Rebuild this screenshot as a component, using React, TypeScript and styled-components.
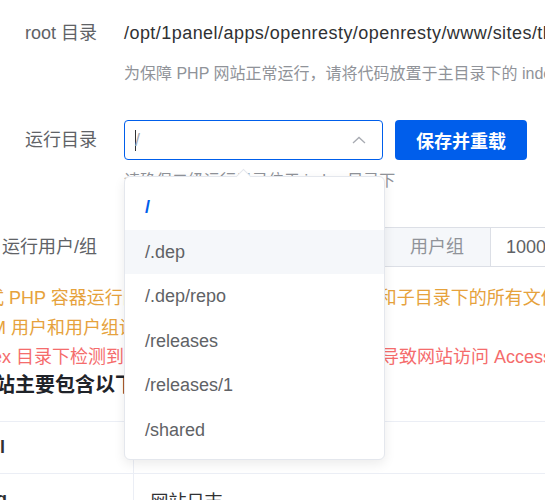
import styled, { createGlobalStyle } from "styled-components";

const GlobalStyle = createGlobalStyle`
  html, body {
    margin: 0;
    padding: 0;
    overflow: hidden;
    background: #ffffff;
  }
  body {
    font-family: "Liberation Sans", "Noto Sans CJK SC", sans-serif;
  }
`;

const COLORS = {
  primary: "#005eeb",
  label: "#606266",
  text: "#303133",
  help: "#909399",
  border: "#dcdfe6",
  light: "#ebeef5",
  fill: "#f5f7fa",
  warning: "#e6a23c",
  danger: "#f56c6c",
};

const options = ["/", "/.dep", "/.dep/repo", "/releases", "/releases/1", "/shared"];

const App = () => {
  return (
    <>
      <GlobalStyle />
      <Page>
        <FormItem>
          <Label>root 目录</Label>
          <Content>
            <Value>/opt/1panel/apps/openresty/openresty/www/sites/thinkphp/index</Value>
            <Help>为保障 PHP 网站正常运行，请将代码放置于主目录下的 index 目录中</Help>
          </Content>
        </FormItem>

        <FormItem>
          <Label>运行目录</Label>
          <Content>
            <SelectRow>
              <Select>
                <SelectText>
                  <Caret />/
                </SelectText>
                <svg width="14" height="8" viewBox="0 0 14 8">
                  <polyline
                    points="1,7 7,1.5 13,7"
                    fill="none"
                    stroke="#a8abb2"
                    strokeWidth="1.3"
                  />
                </svg>
              </Select>
              <PrimaryButton>保存并重载</PrimaryButton>
            </SelectRow>
            <Help>请确保二级运行目录位于 index 目录下</Help>
            <Dropdown>
              <Arrow />
              {options.map((o, i) => (
                <Option key={o} $selected={i === 0} $hover={i === 1}>
                  {o}
                </Option>
              ))}
            </Dropdown>
          </Content>
        </FormItem>

        <FormItem $gap={16}>
          <Label>运行用户/组</Label>
          <Content>
            <UserRow>
              <Group $width="259px">
                <Prepend>用户</Prepend>
                <GroupInput>1000</GroupInput>
              </Group>
              <Group>
                <Prepend>用户组</Prepend>
                <GroupInput>1000</GroupInput>
              </Group>
            </UserRow>
          </Content>
        </FormItem>

        <Notes>
          <Note $color={COLORS.warning} $lh={30}>
            方式 PHP 容器运行的网站，需要将网站目录 index{"\u00a0"} 和子目录下的所有文件、文件夹的所有者设置为 1000，本地 PHP 环境需要参考本地 PHP-
          </Note>
          <Note $color={COLORS.warning} $lh={30}>
            FPM 用户和用户组设置
          </Note>
          <Note $color={COLORS.danger} $lh={28}>
            index 目录下检测到 .user.ini 文件，其中配置可能会{"\u00a0"}导致网站访问 Access denied
          </Note>
          <Heading>网站主要包含以下目录：</Heading>
        </Notes>

        <DirTable>
          <tbody>
            <tr>
              <th>ssl</th>
              <td>证书文件夹</td>
            </tr>
            <tr>
              <th>log</th>
              <td>网站日志</td>
            </tr>
            <tr>
              <th>index</th>
              <td>网站默认目录</td>
            </tr>
          </tbody>
        </DirTable>
      </Page>
    </>
  );
};

export default App;

const Page = styled.div`
  margin-left: -32px;
  width: 900px;
  padding-top: 13px;
`;

const FormItem = styled.div<{ $gap?: number }>`
  display: grid;
  grid-template-columns: 156px 1fr;
  margin-bottom: ${(p) => (p.$gap ?? 35)}px;
`;

const Label = styled.label`
  padding-right: 27px;
  text-align: right;
  height: 40px;
  line-height: 40px;
  font-size: 18px;
  color: ${COLORS.label};
  white-space: nowrap;
`;

const Content = styled.div`
  position: relative;
  min-width: 0;
`;

const Value = styled.div`
  height: 40px;
  line-height: 40px;
  font-size: 18px;
  letter-spacing: 0.45px;
  color: ${COLORS.text};
  white-space: nowrap;
`;

const Help = styled.div`
  margin-top: 10px;
  font-size: 16px;
  line-height: 22px;
  color: ${COLORS.help};
  white-space: nowrap;
`;

const SelectRow = styled.div`
  display: flex;
  gap: 12px;
`;

const Select = styled.div`
  box-sizing: border-box;
  width: 259px;
  height: 40px;
  border: 1px solid ${COLORS.primary};
  border-radius: 4px;
  padding: 0 16px 0 10px;
  display: flex;
  align-items: center;
  justify-content: space-between;
`;

const SelectText = styled.span`
  display: flex;
  align-items: center;
  font-size: 18px;
  color: #a8abb2;
`;

const Caret = styled.span`
  display: inline-block;
  width: 1px;
  height: 21px;
  margin-right: -1px;
  background: #303133;
`;

const PrimaryButton = styled.button`
  height: 40px;
  padding: 0 21px;
  border: none;
  border-radius: 4px;
  background: ${COLORS.primary};
  color: #ffffff;
  font-family: inherit;
  font-size: 18px;
  font-weight: bold;
  cursor: pointer;
`;

const Dropdown = styled.div`
  position: absolute;
  top: 56px;
  left: 0;
  z-index: 10;
  box-sizing: border-box;
  width: 261px;
  padding: 8px 0 6px;
  background: #ffffff;
  border: 1px solid #e4e7ed;
  border-radius: 6px;
  box-shadow: 0 4px 12px rgba(0, 0, 0, 0.08);
`;

const Arrow = styled.span`
  position: absolute;
  top: -6px;
  left: 113px;
  width: 10px;
  height: 10px;
  background: #ffffff;
  border-top: 1px solid #e4e7ed;
  border-left: 1px solid #e4e7ed;
  transform: rotate(45deg);
`;

const Option = styled.div<{ $selected?: boolean; $hover?: boolean }>`
  height: 44.6px;
  line-height: 44.6px;
  padding: 0 20px;
  font-size: 18px;
  white-space: nowrap;
  color: ${(p) => (p.$selected ? COLORS.primary : COLORS.label)};
  font-weight: ${(p) => (p.$selected ? "bold" : "normal")};
  background: ${(p) => (p.$hover ? COLORS.fill : "transparent")};
`;

const UserRow = styled.div`
  display: flex;
`;

const Group = styled.div<{ $width?: string }>`
  display: flex;
  flex: ${(p) => (p.$width ? `0 0 ${p.$width}` : "1")};
  height: 40px;
`;

const Prepend = styled.div`
  box-sizing: border-box;
  padding: 0 26px;
  line-height: 38px;
  font-size: 18px;
  color: ${COLORS.help};
  background: ${COLORS.fill};
  border: 1px solid ${COLORS.border};
  white-space: nowrap;
`;

const GroupInput = styled.div`
  box-sizing: border-box;
  flex: 1;
  padding: 0 15px;
  line-height: 38px;
  font-size: 18px;
  color: ${COLORS.label};
  border: 1px solid ${COLORS.border};
  border-left: none;
`;

const Notes = styled.div`
  margin-bottom: 22px;
`;

const Note = styled.div<{ $color: string; $lh: number }>`
  font-size: 18px;
  line-height: ${(p) => p.$lh}px;
  color: ${(p) => p.$color};
  white-space: nowrap;
`;

const Heading = styled.div`
  padding-left: 7px;
  font-size: 20px;
  line-height: 28px;
  font-weight: bold;
  color: #1f2329;
  white-space: nowrap;
`;

const DirTable = styled.table`
  width: 700px;
  border-collapse: collapse;
  font-size: 18px;
  th,
  td {
    height: 52px;
    box-sizing: border-box;
    border-top: 1px solid ${COLORS.light};
    border-bottom: 1px solid ${COLORS.light};
    text-align: left;
    white-space: nowrap;
  }
  th {
    width: 165px;
    padding: 0 12px;
    font-weight: bold;
    color: ${COLORS.text};
    border-right: 1px solid ${COLORS.light};
  }
  td {
    padding: 0 17px;
    color: ${COLORS.text};
  }
`;
